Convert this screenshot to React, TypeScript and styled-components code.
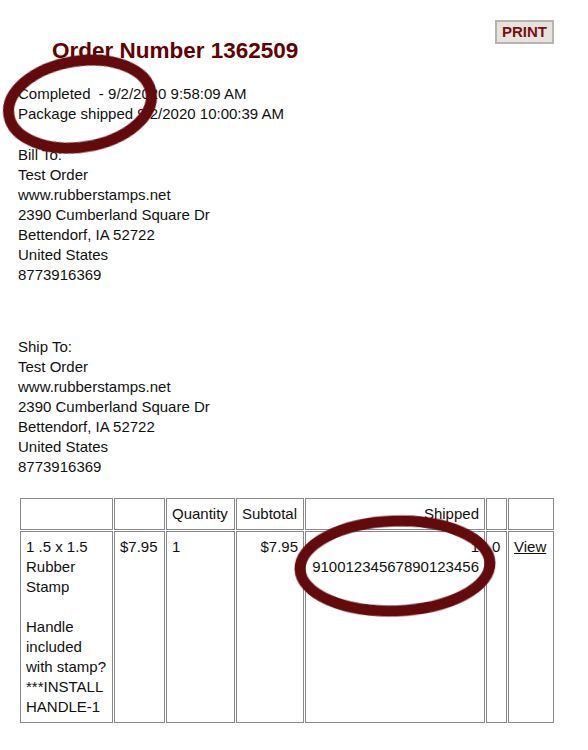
import styled, { createGlobalStyle } from 'styled-components'

const GlobalStyle = createGlobalStyle`
  html, body {
    margin: 0;
    padding: 0;
    background: #ffffff;
  }
  body {
    font-family: 'Liberation Sans', Arial, sans-serif;
    font-size: 15px;
    line-height: 20px;
    color: #111111;
  }
`

type Address = {
  label: string
  lines: string[]
}

const addresses: Address[] = [
  {
    label: 'Bill To:',
    lines: [
      'Test Order',
      'www.rubberstamps.net',
      '2390 Cumberland Square Dr',
      'Bettendorf, IA 52722',
      'United States',
      '8773916369',
    ],
  },
  {
    label: 'Ship To:',
    lines: [
      'Test Order',
      'www.rubberstamps.net',
      '2390 Cumberland Square Dr',
      'Bettendorf, IA 52722',
      'United States',
      '8773916369',
    ],
  },
]

const columns = [93, 51, 69, 68, 180, 21, 46]

export default function App() {
  return (
    <>
      <GlobalStyle />
      <Page>
        <Header>
          <Title>Order Number 1362509</Title>
          <PrintButton>PRINT</PrintButton>
        </Header>

        <Status>
          <div>Completed&nbsp; - 9/2/2020 9:58:09 AM</div>
          <div>Package shipped 9/2/2020 10:00:39 AM</div>
        </Status>

        {addresses.map((address, i) => (
          <AddressBlock key={address.label} first={i === 0}>
            <div>{address.label}</div>
            {address.lines.map((line) => (
              <div key={line}>{line}</div>
            ))}
          </AddressBlock>
        ))}

        <ItemsTable>
          <colgroup>
            {columns.map((w, i) => (
              <col key={i} style={{ width: w }} />
            ))}
          </colgroup>
          <thead>
            <tr>
              <HeadCell />
              <HeadCell />
              <HeadCell>Quantity</HeadCell>
              <HeadCell>Subtotal</HeadCell>
              <HeadCell align="right">Shipped</HeadCell>
              <HeadCell />
              <HeadCell />
            </tr>
          </thead>
          <tbody>
            <tr>
              <Cell>
                1 .5 x 1.5 Rubber Stamp
                <br />
                <br />
                Handle included with stamp? ***INSTALL HANDLE-1
              </Cell>
              <Cell>$7.95</Cell>
              <Cell>1</Cell>
              <Cell align="right">$7.95</Cell>
              <Cell align="right">
                1
                <br />
                <Tracking>91001234567890123456</Tracking>
              </Cell>
              <Cell>0</Cell>
              <Cell>
                <ViewLink href="#">View</ViewLink>
              </Cell>
            </tr>
          </tbody>
        </ItemsTable>

        <Marks viewBox="0 0 588 750" aria-hidden="true">
          <ellipse
            cx="80"
            cy="104"
            rx="72"
            ry="43"
            transform="rotate(-9 80 104)"
          />
          <ellipse
            cx="395"
            cy="566"
            rx="95"
            ry="45"
            transform="rotate(-2 395 566)"
          />
        </Marks>
      </Page>
    </>
  )
}

const Page = styled.div`
  position: relative;
  width: 588px;
  min-height: 750px;
  box-sizing: border-box;
  padding: 20px 0 0 18px;
`

const Header = styled.div`
  display: flex;
  align-items: flex-start;
  justify-content: space-between;
  width: 536px;
`

const Title = styled.h1`
  margin: 18px 0 0 34px;
  font-size: 22.5px;
  line-height: 26px;
  font-weight: 700;
  color: #630000;
`

const PrintButton = styled.button`
  height: 24px;
  padding: 0 5px;
  border: 2px solid #b9b5ae;
  background: #e6e2dd;
  color: #7a0f12;
  font-family: 'Liberation Sans', Arial, sans-serif;
  font-size: 15px;
  font-weight: 700;
  line-height: 20px;
  cursor: pointer;
`

const Status = styled.div`
  margin-top: 20px;
`

const AddressBlock = styled.div<{ first: boolean }>`
  margin-top: ${({ first }) => (first ? '21px' : '52px')};
`

const ItemsTable = styled.table`
  margin-top: 20px;
  margin-left: 1px;
  width: 535px;
  table-layout: fixed;
  border-collapse: separate;
  border-spacing: 1px;
`

const HeadCell = styled.th<{ align?: 'left' | 'right' }>`
  padding: 5px;
  border: 1px solid #8a8a8a;
  font-weight: 400;
  text-align: ${({ align }) => align ?? 'left'};
  vertical-align: top;
`

const Cell = styled.td<{ align?: 'left' | 'right' }>`
  padding: 5px;
  border: 1px solid #8a8a8a;
  text-align: ${({ align }) => align ?? 'left'};
  vertical-align: top;
  height: 180px;
`

const Tracking = styled.span`
  white-space: nowrap;
`

const ViewLink = styled.a`
  color: #111111;
  text-decoration: underline;
`

const Marks = styled.svg`
  position: absolute;
  left: 0;
  top: 0;
  width: 588px;
  height: 750px;
  pointer-events: none;

  ellipse {
    fill: none;
    stroke: #620a0c;
    stroke-width: 11px;
    filter: blur(0.6px);
  }
`
